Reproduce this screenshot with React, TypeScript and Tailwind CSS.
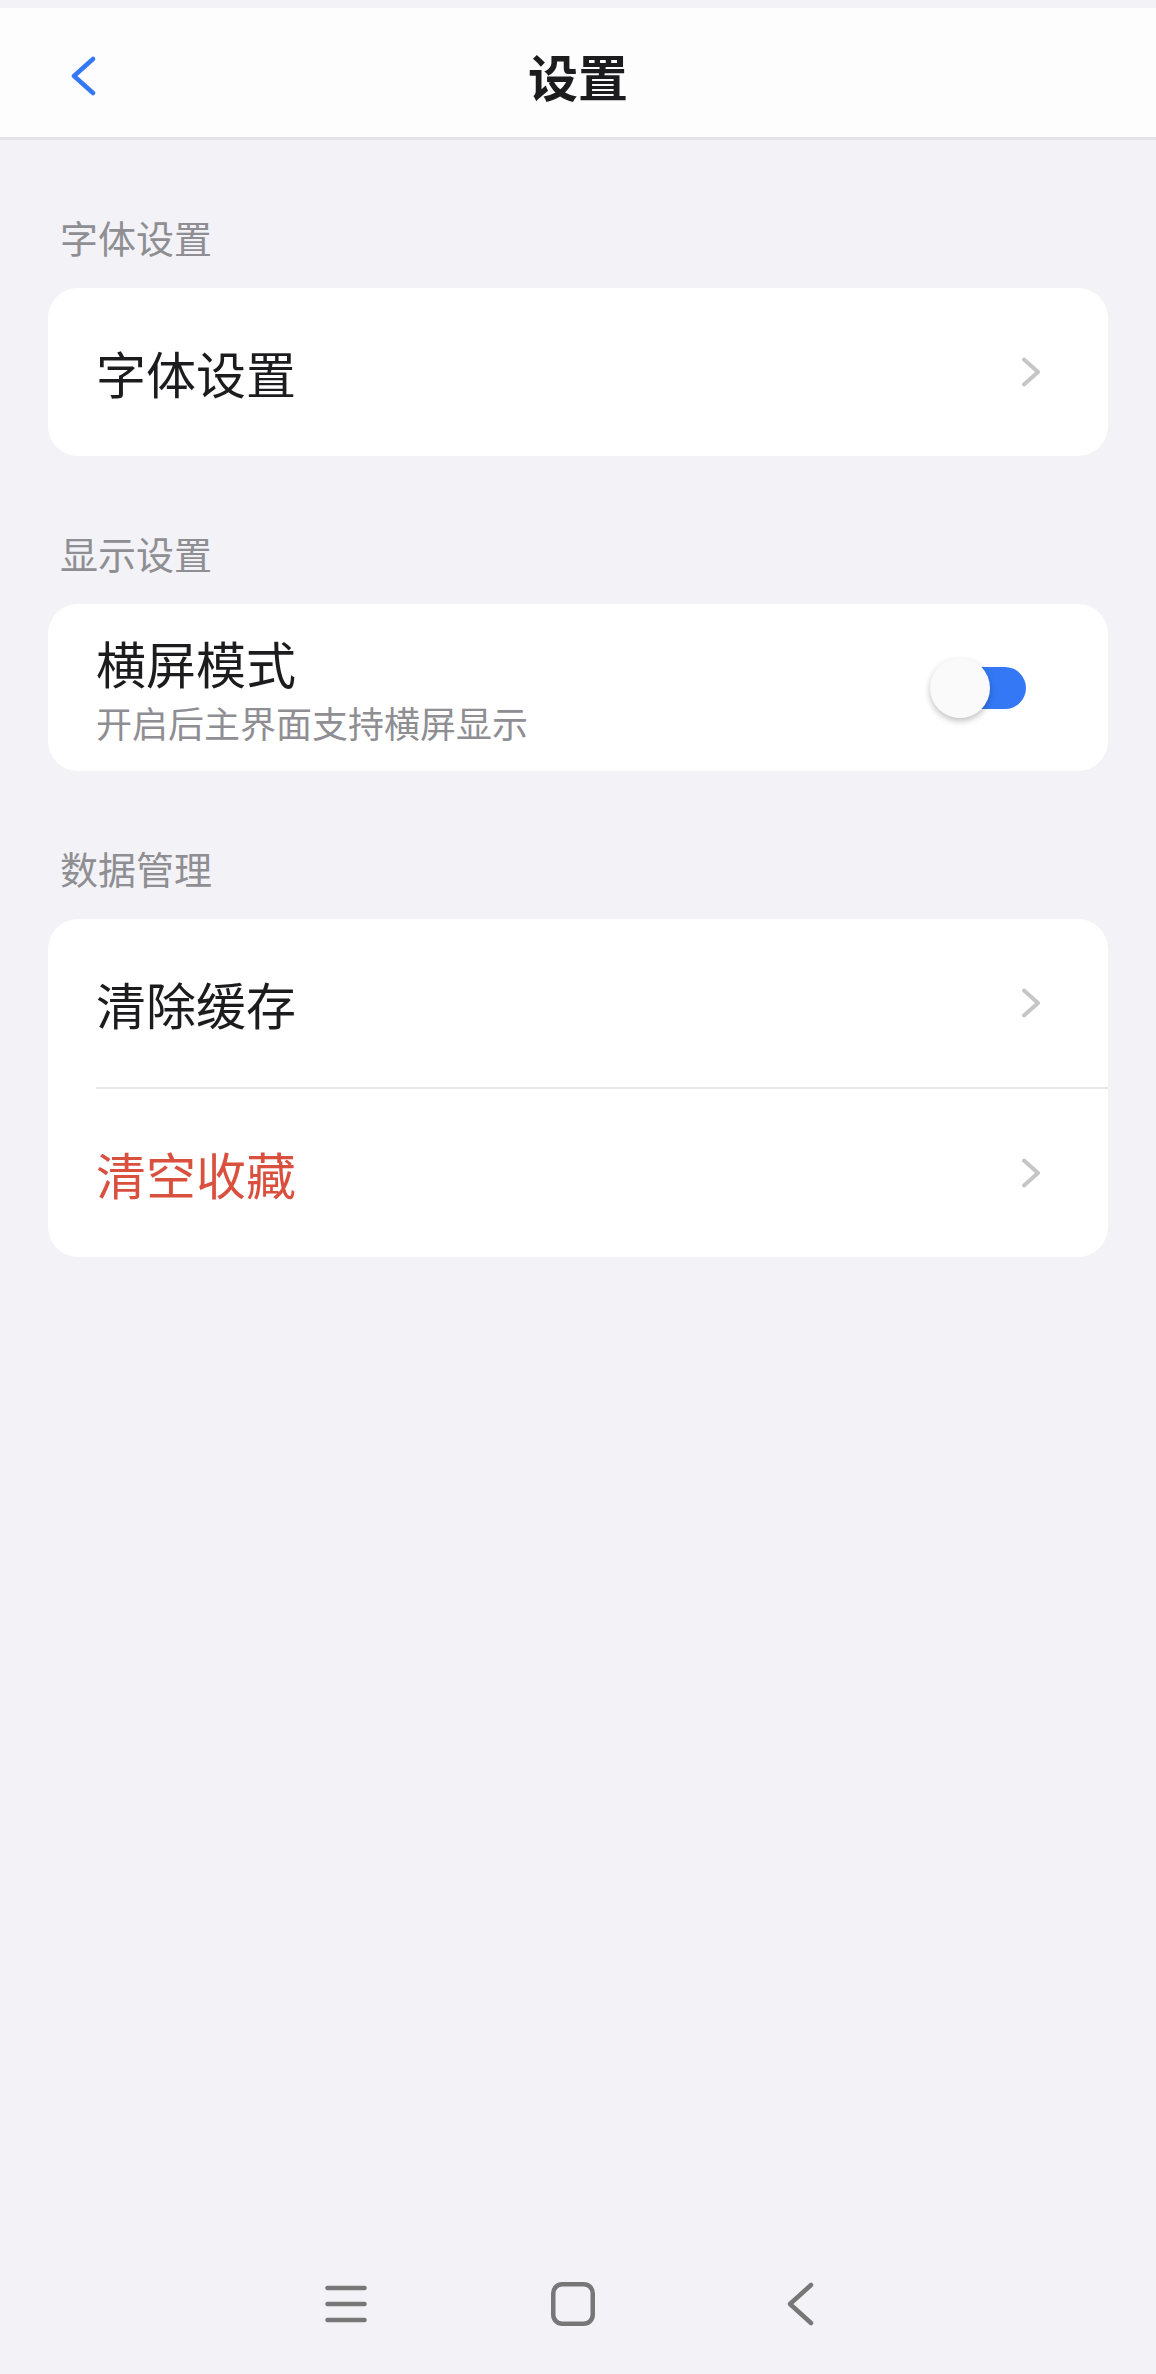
import type { ReactNode } from 'react';

const FONT = "font-['Noto_Sans_CJK_SC','Noto_Sans',sans-serif]";

function ChevronRight() {
  return (
    <svg width="20" height="30" viewBox="0 0 20 30" fill="none" className="shrink-0">
      <polyline
        points="3,2.5 17,15 3,27.5"
        stroke="#c6c6c8"
        strokeWidth="4"
        strokeLinecap="round"
        strokeLinejoin="round"
      />
    </svg>
  );
}

function SectionLabel({ children }: { children: ReactNode }) {
  return (
    <div className="mt-[72px] mb-[26px] pl-[12px] text-[38px] leading-[50px] text-[#8e8e93]">
      {children}
    </div>
  );
}

function Card({ children }: { children: ReactNode }) {
  return <div className="overflow-hidden rounded-[30px] bg-white">{children}</div>;
}

function LinkRow({ label, danger = false }: { label: string; danger?: boolean }) {
  return (
    <div className="flex h-[168px] items-center justify-between pl-[48px] pr-[67px]">
      <span className={danger ? 'text-[50px] leading-[60px] text-[#d9503f]' : 'text-[50px] leading-[60px] text-[#1c1c1e]'}>
        {label}
      </span>
      <ChevronRight />
    </div>
  );
}

function Switch() {
  // track is on (blue) while the knob sits at the left, as in the capture
  return (
    <div className="relative h-[60px] w-[96px] shrink-0">
      <div className="absolute right-0 top-[9px] h-[42px] w-[90px] rounded-full bg-[#3478f6]" />
      <div className="absolute left-0 top-0 h-[60px] w-[60px] rounded-full bg-[#fafafa] shadow-[0_3px_6px_rgba(0,0,0,0.25)]" />
    </div>
  );
}

export default function App() {
  return (
    <div className={`flex min-h-[2374px] w-full flex-col bg-[#f2f2f7] ${FONT}`}>
      <div className="h-[8px]" />

      {/* Title bar */}
      <header className="relative flex h-[132px] items-center justify-center border-b-[3px] border-[#e4e4e8] bg-[#fdfdfd] pt-[4px]">
        <button className="absolute left-[69px] top-[48px]">
          <svg width="28" height="40" viewBox="0 0 28 40" fill="none">
            <polyline
              points="24,3 5,20 24,37"
              stroke="#3478f6"
              strokeWidth="4.5"
              strokeLinecap="round"
              strokeLinejoin="round"
            />
          </svg>
        </button>
        <h1 className="text-[50px] font-bold leading-[60px] text-[#1c1c1e]">设置</h1>
      </header>

      <main className="px-[48px]">
        <SectionLabel>字体设置</SectionLabel>
        <Card>
          <LinkRow label="字体设置" />
        </Card>

        <SectionLabel>显示设置</SectionLabel>
        <Card>
          <div className="flex h-[167px] items-center justify-between pl-[48px] pr-[82px]">
            <div className="flex flex-col">
              <span className="text-[50px] leading-[60px] text-[#1c1c1e]">横屏模式</span>
              <span className="mt-[8px] text-[36px] leading-[44px] text-[#8e8e93]">开启后主界面支持横屏显示</span>
            </div>
            <Switch />
          </div>
        </Card>

        <SectionLabel>数据管理</SectionLabel>
        <Card>
          <LinkRow label="清除缓存" />
          <div className="ml-[48px] h-[2px] bg-[#e5e5ea]" />
          <LinkRow label="清空收藏" danger />
        </Card>
      </main>

      <div className="flex-1" />

      {/* System navigation bar */}
      <nav className="flex h-[140px] items-center pl-[232px]">
        <div className="flex w-[227px] justify-center">
          <svg width="42" height="40" viewBox="0 0 42 40" fill="none">
            <g stroke="#777777" strokeWidth="4.5" strokeLinecap="round">
              <line x1="2.5" y1="4" x2="39.5" y2="4" />
              <line x1="2.5" y1="20" x2="39.5" y2="20" />
              <line x1="2.5" y1="36" x2="39.5" y2="36" />
            </g>
          </svg>
        </div>
        <div className="flex w-[227px] justify-center">
          <svg width="44" height="44" viewBox="0 0 44 44" fill="none">
            <rect x="2.25" y="2.25" width="39.5" height="39.5" rx="9" stroke="#777777" strokeWidth="4.5" />
          </svg>
        </div>
        <div className="flex w-[227px] justify-center">
          <svg width="28" height="44" viewBox="0 0 28 44" fill="none">
            <polyline
              points="25,3 4,22 25,41"
              stroke="#777777"
              strokeWidth="4.5"
              strokeLinecap="round"
              strokeLinejoin="round"
            />
          </svg>
        </div>
      </nav>
    </div>
  );
}
